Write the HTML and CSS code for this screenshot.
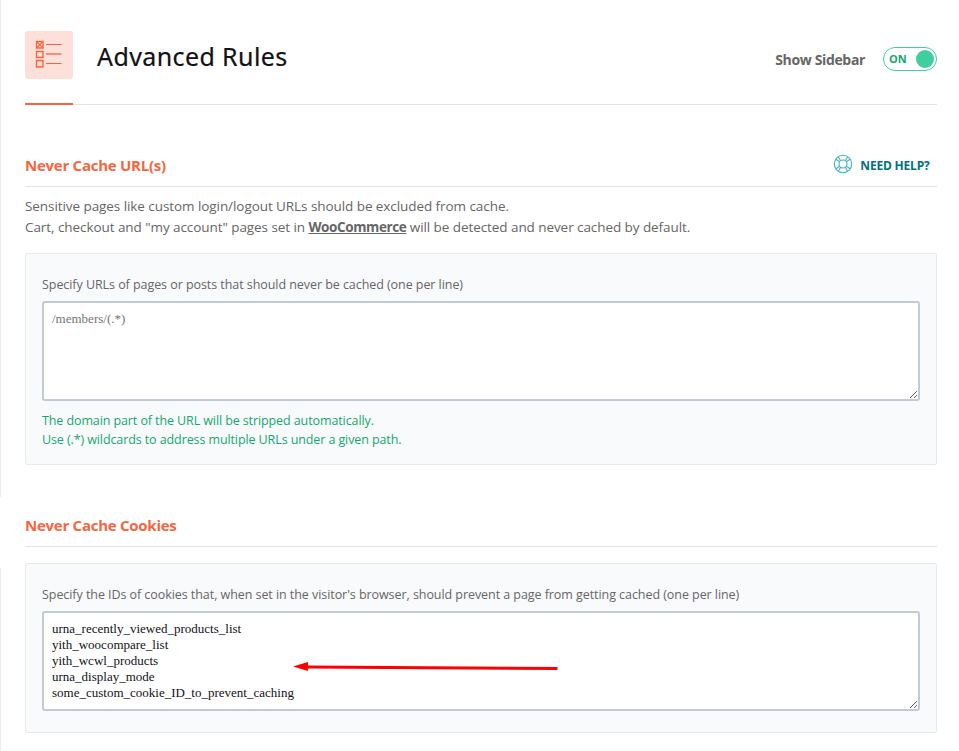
FILE: index.html
```html
<!DOCTYPE html>
<html lang="en">
<head>
<meta charset="utf-8">
<title>Advanced Rules</title>
<link rel="stylesheet" href="styles.css">
</head>
<body>
<div class="page">
  <div class="rail"><span class="rail-item"></span><span class="rail-gap"></span><span class="rail-rest"></span></div>
  <main class="content">
    <header class="header">
      <div class="header-icon">
        <svg width="48" height="48" viewBox="0 0 48 48" fill="none" stroke="#f56640">
          <path d="M11.500 10.500h6.500v6.500h-6.500zM11.500 20.500h6.500v6h-6.500zM11.500 29.500h6.500v6.500h-6.500z" stroke-width="1.400"/>
          <path d="M12 11l5.500 5.500M17.500 11l-5.500 5.500M21 13.500h15.500M21 32.500h15.500" stroke-width="1.100"/>
          <path d="M21 23h15.500" stroke-width="2" opacity=".65"/>
        </svg>
      </div>
      <h1 class="title">Advanced Rules</h1>
      <span class="toggle-label">Show Sidebar</span>
      <div class="toggle"><span class="toggle-text">ON</span><span class="knob"></span></div>
    </header>

    <section class="section">
      <div class="section-head">
        <h2 class="section-title">Never Cache URL(s)</h2>
        <a class="help">
          <svg width="20" height="20" viewBox="0 0 20 20" fill="none" stroke="#40b4c0" stroke-width="1.100">
            <circle cx="10" cy="10" r="8.700"/><circle cx="10" cy="10" r="4"/>
            <path d="M2.800 5.300l4 2.400M5.300 2.800l2.400 4M17.200 5.300l-4 2.400M14.700 2.800l-2.400 4M2.800 14.700l4-2.400M5.300 17.200l2.400-4M17.200 14.700l-4-2.400M14.700 17.200l-2.400-4"/>
          </svg>
          <span class="help-text">NEED HELP?</span>
        </a>
      </div>
      <p class="desc">Sensitive pages like custom login/logout URLs should be excluded from cache.<br>Cart, checkout and "my account" pages set in <a class="link">WooCommerce</a> will be detected and never cached by default.</p>
      <div class="panel">
        <label class="label">Specify URLs of pages or posts that should never be cached (one per line)</label>
        <textarea class="field" placeholder="/members/(.*)"></textarea>
        <p class="hint">The domain part of the URL will be stripped automatically.<br>Use (.*) wildcards to address multiple URLs under a given path.</p>
      </div>
    </section>

    <section class="section cookies">
      <div class="section-head">
        <h2 class="section-title">Never Cache Cookies</h2>
      </div>
      <div class="panel">
        <label class="label">Specify the IDs of cookies that, when set in the visitor's browser, should prevent a page from getting cached (one per line)</label>
        <div class="field-wrap">
          <textarea class="field" spellcheck="false">urna_recently_viewed_products_list
yith_woocompare_list
yith_wcwl_products
urna_display_mode
some_custom_cookie_ID_to_prevent_caching</textarea>
          <svg class="arrow" width="266" height="12" viewBox="0 0 266 12"><path d="M14 6L264.500 7.500" stroke="#f00" stroke-width="3"/><path d="M0 5.500L15 1v9z" fill="#f00"/></svg>
        </div>
      </div>
    </section>
  </main>
</div>
</body>
</html>
```

FILE: styles.css
```css
* { box-sizing: border-box; }
body { margin: 0; background: #fff; overflow: hidden; font-family: "Open Sans", "Noto Sans", sans-serif; color: #666; }
h1, h2, p { margin: 0; }
.page { display: flex; height: 751px; }
.rail { width: 1px; display: flex; flex-direction: column; }
.rail-item { height: 497px; background: #ececee; }
.rail-gap { height: 71px; }
.rail-rest { flex: 1; background: #ececee; }
.content { width: 936px; padding-left: 24px; }
.header { height: 105px; display: flex; align-items: flex-start; padding-top: 31px; border-bottom: 1px solid #e0e4e9; }
.header-icon { position: relative; width: 48px; height: 48px; border-radius: 3px; background: #fee0da; }
.header-icon::after { content: ""; position: absolute; left: 0; top: 72px; width: 48px; height: 2px; background: #f56640; }
.header-icon svg { display: block; }
.title { margin-left: 24px; flex: 1; font: 400 25px/51px "Noto Sans", sans-serif; letter-spacing: .4px; color: #121116; -webkit-text-stroke: .2px #121116; white-space: nowrap; }
.toggle-label { font-size: 14px; font-weight: 700; line-height: 58px; letter-spacing: -.35px; margin-right: 18px; }
.toggle { width: 54px; height: 24px; margin-top: 16px; border: 1px solid #3ecf9c; border-radius: 12px; display: flex; align-items: center; justify-content: space-between; padding: 0 2px 0 5px; }
.toggle-text { font-size: 11px; line-height: 16px; font-weight: 700; color: #14a86f; }
.knob { width: 18px; height: 18px; border-radius: 50%; background: #3ecf9c; }
.section-head { height: 82px; padding-top: 50px; display: flex; justify-content: space-between; border-bottom: 1px solid #e0e4e9; }
.section-title { font-size: 15px; line-height: 20px; font-weight: 700; letter-spacing: -.26px; color: #f56640; white-space: nowrap; }
.help { display: flex; gap: 7px; margin-right: 7.500px; margin-top: -1px; color: #02707f; font-size: 12px; line-height: 24px; font-weight: 700; letter-spacing: -.2px; }
.desc { margin: 9px 0 15px; font-size: 13.500px; line-height: 21px; letter-spacing: -.07px; white-space: nowrap; }
.link { font-weight: 700; letter-spacing: -.4px; text-decoration: underline; }
.panel { padding: 21px 16px 0; height: 212px; background: #f9fafc; border: 1px solid #e8ebee; border-radius: 2px; }
.label { display: block; font-size: 12.500px; line-height: 20px; letter-spacing: -.06px; margin-bottom: 6px; white-space: nowrap; }
.field { display: block; width: 878px; height: 100px; border: 2px solid #c2cad6; border-radius: 3px; margin: 0; padding: 8px; outline: 0; font: 13px/16px "Liberation Serif", serif; color: #121116; background: #fff; resize: both; overflow: hidden; }
.field::placeholder { color: #757575; }
.hint { margin-top: 10px; font-size: 12.500px; line-height: 19px; letter-spacing: -.1px; color: #14a86f; white-space: nowrap; }
.cookies .panel { height: 170px; margin-top: 16px; }
.field-wrap { position: relative; }
.arrow { position: absolute; left: 251px; top: 50px; }
```
